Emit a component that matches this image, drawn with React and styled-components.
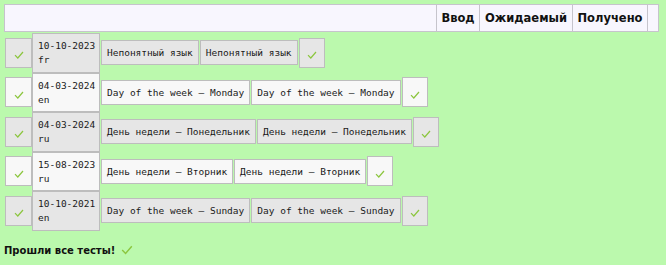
import React from "react";
import styled, { createGlobalStyle } from "styled-components";

const GlobalStyle = createGlobalStyle`
  html, body {
    margin: 0;
    padding: 0;
    background: #bbf9ad;
  }
  body {
    font-family: "DejaVu Sans", Verdana, sans-serif;
    color: #111;
  }
`;

const Page = styled.div`
  padding: 4px;
`;

const HeadBar = styled.div`
  display: flex;
  width: 655px;
  height: 28px;
  box-sizing: border-box;
  border: 1px solid #c6c4cc;
  background: #f8f6fe;
`;

const HeadSpacer = styled.div`
  flex: 1;
`;

const HeadCell = styled.div`
  width: ${(p) => p.w}px;
  box-sizing: border-box;
  border-left: 1px solid #c6c4cc;
  display: flex;
  align-items: center;
  justify-content: center;
  font-size: 11.5px;
  font-weight: bold;
`;

const Rows = styled.div`
  display: flex;
  flex-direction: column;
  padding-left: 1px;
  margin-top: 1px;
`;

const Row = styled.div`
  display: flex;
  align-items: center;
  height: 39.5px;
`;

const Cell = styled.div`
  box-sizing: border-box;
  border: 1px solid #bdbdbd;
  background: ${(p) => (p.odd ? "#e6e6e6" : "#f8f8f8")};
  font-family: "DejaVu Sans Mono", "Liberation Mono", monospace;
  font-size: 9.5px;
  line-height: 14px;
  color: #1a1a1a;
`;

const CheckCell = styled(Cell)`
  width: ${(p) => p.w || 27}px;
  height: 30px;
  display: flex;
  align-items: center;
  justify-content: center;
  padding-top: 5px;
  margin-left: ${(p) => p.gap || 0}px;
`;

const DateCell = styled(Cell)`
  width: 68px;
  height: 39.5px;
  padding: 5px 4px 0 5px;
  white-space: pre;
`;

const TextCell = styled(Cell)`
  height: 25px;
  padding: 0 5px;
  line-height: 23px;
  white-space: nowrap;
  margin-left: 1px;
`;

const Done = styled.div`
  display: flex;
  align-items: center;
  gap: 6px;
  margin-top: 14px;
  font-size: 10px;
  font-weight: bold;
`;

const Tick = ({ size = 10 }) => (
  <svg width={size} height={size * 0.8} viewBox="0 0 10 8">
    <polyline
      points="1,4.2 3.8,7 9,1"
      fill="none"
      stroke="#8cc63f"
      strokeWidth="1.2"
    />
  </svg>
);

const tests = [
  { date: "10-10-2023", lang: "fr", expected: "Непонятный язык", got: "Непонятный язык" },
  { date: "04-03-2024", lang: "en", expected: "Day of the week — Monday", got: "Day of the week — Monday" },
  { date: "04-03-2024", lang: "ru", expected: "День недели — Понедельник", got: "День недели — Понедельник" },
  { date: "15-08-2023", lang: "ru", expected: "День недели — Вторник", got: "День недели — Вторник" },
  { date: "10-10-2021", lang: "en", expected: "Day of the week — Sunday", got: "Day of the week — Sunday" },
];

export default function App() {
  return (
    <Page>
      <GlobalStyle />
      <HeadBar>
        <HeadSpacer />
        <HeadCell w={43}>Ввод</HeadCell>
        <HeadCell w={93}>Ожидаемый</HeadCell>
        <HeadCell w={75}>Получено</HeadCell>
        <HeadCell w={11} />
      </HeadBar>
      <Rows>
        {tests.map((t, i) => {
          const odd = i % 2 === 0;
          return (
            <Row key={i}>
              <CheckCell odd={odd}>
                <Tick />
              </CheckCell>
              <DateCell odd={odd}>{`${t.date}\n${t.lang}`}</DateCell>
              <TextCell odd={odd}>{t.expected}</TextCell>
              <TextCell odd={odd}>{t.got}</TextCell>
              <CheckCell odd={odd} w={26} gap={1}>
                <Tick />
              </CheckCell>
            </Row>
          );
        })}
      </Rows>
      <Done>
        Прошли все тесты! <Tick size={12} />
      </Done>
    </Page>
  );
}
